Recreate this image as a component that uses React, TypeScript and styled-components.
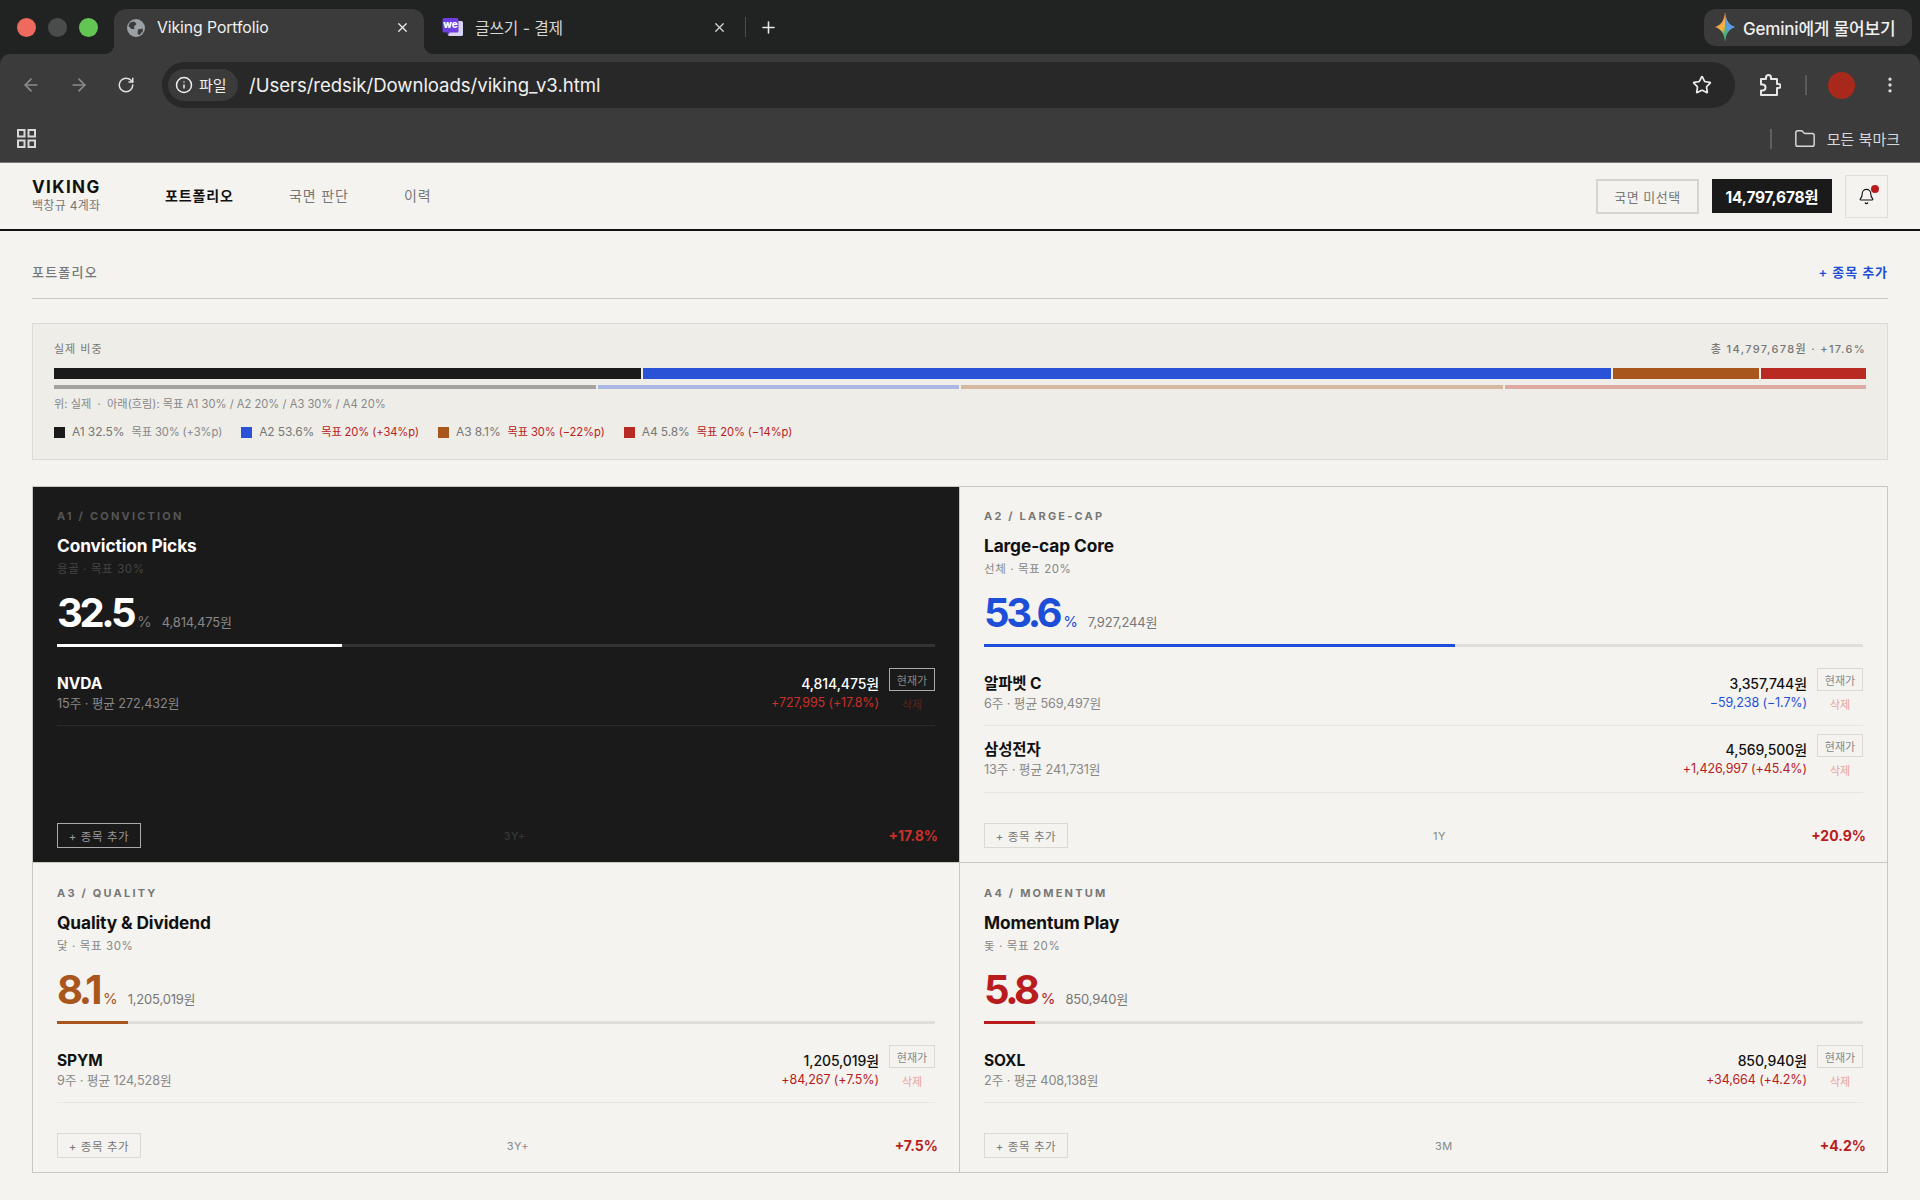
import React from "react";
import styled, { createGlobalStyle } from "styled-components";
import { ArrowLeft, ArrowRight, RotateCw, Info, Star, EllipsisVertical, Folder, Bell, X, Plus } from "lucide-react";

const FONT = `Inter, "Noto Sans CJK KR", sans-serif`;

const Global = createGlobalStyle`
  html, body { margin: 0; padding: 0; background: #f4f3ef; }
  body { font-family: ${FONT}; color: #111; overflow: hidden; }
  * { box-sizing: border-box; }
`;

const ChromeFrame = styled.div`background: #202322;`;
const TabStrip = styled.div`
  height: 54px; display: flex; align-items: flex-end; color: #e8e8e8;
`;
const Lights = styled.div`
  width: 114px; height: 54px; padding-left: 17px; display: flex; gap: 12px; align-items: center;
`;
const Light = styled.span<{ $c: string }>`
  width: 19px; height: 19px; border-radius: 50%; background: ${p => p.$c};
`;
const Tab = styled.div<{ $active?: boolean }>`
  position: relative; width: ${p => (p.$active ? 310 : 321)}px; height: 45px; border-radius: 12px 12px 0 0; background: ${p => (p.$active ? "#3b3b3b" : "transparent")};
  display: flex; align-items: center; padding: 0 ${p => (p.$active ? "14px 8px 13px" : "18px 8px 18px")}; gap: ${p => (p.$active ? 12 : 11)}px; font-size: 15.800px; letter-spacing: -0.1px; color: ${p => (p.$active ? "#f0f0f0" : "#d6d6d6")};
  ${p => p.$active && `
    &::before, &::after { content: ""; position: absolute; bottom: 0; width: 10px; height: 10px; }
    &::before { left: -10px; background: radial-gradient(circle at 0 0, #202322 10px, #3b3b3b 10.5px); }
    &::after { right: -10px; background: radial-gradient(circle at 100% 0, #202322 10px, #3b3b3b 10.5px); }
  `}
`;
const TabTitle = styled.span`flex: 1; white-space: nowrap;`;
const TabSep = styled.span`width: 1px; height: 20px; background: #4b4d4d; margin: 0 0 17px 0;`;
const NewTab = styled.span`display: flex; margin: 0 0 17px 13px;`;
const Gemini = styled.div`
  margin-left: auto; margin-right: 8px; margin-bottom: 8px; width: 208px; height: 37px; background: #3b3b3b; border-radius: 12px;
  display: flex; align-items: center; gap: 8px; padding: 0 0 1px 11px; font-size: 17px; font-weight: 500; color: #f0f0f0; white-space: nowrap; letter-spacing: -0.2px;
`;
const Toolbar = styled.div`
  height: 62px; background: #3b3b3b; display: flex; align-items: center; padding: 0 0 0 21px; color: #e6e6e6;
  border-radius: 10px 10px 0 0;
`;
const NavIcons = styled.div`display: flex; align-items: center; gap: 28px; width: 141px;`;
const Omni = styled.div`
  width: 1573px; height: 46px; background: #282828; border-radius: 23px; display: flex; align-items: center; padding: 0 23px 0 6px;
`;
const FilePill = styled.div`
  width: 70px; height: 32px; border-radius: 16px; background: #3b3b3b; display: flex; align-items: center; gap: 6px; padding: 0 0 1px 7px; font-size: 15px; color: #eee;
`;
const Url = styled.span`margin-left: 11px; flex: 1; font-size: 18.600px; color: #f0f0f0; letter-spacing: -0.05px;`;
const ToolRight = styled.div`flex: 1; display: flex; align-items: center; padding-left: 24px;`;
const ToolSep = styled.span`width: 2px; height: 20px; background: #5a5a5a; margin: 0 21px 0 24px;`;
const Avatar = styled.span`width: 27px; height: 27px; border-radius: 50%; background: #a8291c; margin-right: 25px;`;
const BookmarkBar = styled.div`
  height: 47px; background: #3b3b3b; border-bottom: 1px solid #777; display: flex; align-items: flex-start; padding: 0 20px 0 17px; color: #d8d8d8;
`;
const AppsIcon = styled.span`margin-top: 13px; display: flex;`;
const BmRight = styled.div`margin-left: auto; display: flex; align-items: center; gap: 11px; font-size: 15px; height: 40px; margin-top: 3px; white-space: nowrap;`;
const BmLabel = styled.span`margin-top: -2px;`;
const BmSep = styled.span`width: 2px; height: 20px; background: #5f5f5f; margin-right: 11px;`;

const Header = styled.header`
  height: 68px; border-bottom: 2px solid #111; background: #f4f3ef; display: flex; align-items: center; padding: 0 32px;
`;
const Brand = styled.div`width: 133px; display: flex; flex-direction: column; gap: 1px; margin-top: -3px;`;
const Logo = styled.div`font-size: 17px; line-height: 21px; font-weight: 700; letter-spacing: 1.4px; color: #111;`;
const LogoSub = styled.div`font-size: 12px; line-height: 14px; color: #777; letter-spacing: 0.3px;`;
const Nav = styled.nav`display: flex; gap: 55px; margin-top: -2px;`;
const NavItem = styled.span<{ $active?: boolean }>`
  font-size: 14px; letter-spacing: 0.9px; font-weight: ${p => (p.$active ? 700 : 400)}; color: ${p => (p.$active ? "#111" : "#777")};
`;
const HeaderRight = styled.div`margin-left: auto; display: flex; align-items: center;`;
const RegimeBtn = styled.div`
  width: 103px; height: 35px; border: 2px solid #d6d4cd; display: flex; align-items: center; justify-content: center; font-size: 13px; letter-spacing: 0.5px; color: #777;
`;
const Money = styled.div`
  margin-left: 13px; width: 120px; height: 34px; background: #1a1a1a; color: #fff; display: flex; align-items: center; justify-content: center; font-size: 15.500px; font-weight: 700; letter-spacing: -0.2px;
`;
const BellBox = styled.div`
  margin-left: 13px; width: 43px; height: 43px; border: 1px solid #e0ded8; display: flex; align-items: center; justify-content: center; position: relative; color: #111;
`;
const BellDot = styled.span`position: absolute; width: 8px; height: 8px; border-radius: 50%; background: #b91c1c; top: 9px; right: 8px;`;

const Main = styled.main`padding: 0 32px;`;
const SectionHead = styled.div`
  padding: 33px 0 18px; border-bottom: 1px solid #c9c7c1; display: flex; justify-content: space-between; align-items: center; line-height: 16px;
`;
const SectionTitle = styled.span`font-size: 13px; letter-spacing: 1.2px; color: #777; font-weight: 500;`;
const AddLink = styled.span`font-size: 13px; letter-spacing: 0.9px; color: #1d4ed8; font-weight: 600;`;

const Panel = styled.section`
  margin-top: 24px; height: 137px; background: #eeede8; border: 1px solid #dcdad4; padding: 18px 21px 0;
`;
const PanelTop = styled.div`display: flex; justify-content: space-between; font-size: 11px; line-height: 14px; color: #777; letter-spacing: 1px;`;
const PanelTotal = styled.span`letter-spacing: 1.35px; font-weight: 500;`;
const BarRow = styled.div<{ $h: number; $mt: number }>`
  display: flex; gap: 2px; height: ${p => p.$h}px; margin-top: ${p => p.$mt}px;
`;
const BarSeg = styled.div<{ $c: string; $faint?: boolean }>`
  background: ${p => p.$c}; opacity: ${p => (p.$faint ? 0.35 : 1)};
`;
const Note = styled.div`margin-top: 8px; font-size: 11.200px; line-height: 14px; color: #888;`;
const Legend = styled.div`margin-top: 13px; display: flex; gap: 19px; font-size: 12px; line-height: 16px;`;
const LegendItem = styled.div`display: flex; align-items: center; color: #777; letter-spacing: -0.1px;`;
const Swatch = styled.span<{ $c: string }>`width: 11px; height: 11px; background: ${p => p.$c}; margin-right: 7px;`;
const LegendGoal = styled.span<{ $off?: boolean }>`margin-left: 7px; font-size: 11.200px; color: ${p => (p.$off ? "#b91c1c" : "#888")};`;

const Grid = styled.section`
  margin-top: 26px; border: 1px solid #c9c7c1; display: grid; grid-template-columns: 1fr 1fr; grid-template-rows: 376px 309px;
`;
const Card = styled.article<{ $dark?: boolean; $right?: boolean; $bottom?: boolean }>`
  background: ${p => (p.$dark ? "#1a1a1a" : "#f4f3ef")};
  border-right: ${p => (p.$right ? "none" : "1px solid #c9c7c1")};
  border-bottom: ${p => (p.$bottom ? "none" : "1px solid #c9c7c1")};
  padding: ${p => (p.$bottom ? 23 : 22)}px 24px 14px; display: flex; flex-direction: column; color: ${p => (p.$dark ? "#fff" : "#111")};
`;
const Label = styled.div<{ $dark?: boolean }>`
  font-size: 11px; line-height: 14px; font-weight: 700; letter-spacing: 2.200px; color: ${p => (p.$dark ? "#555" : "#777")};
`;
const Title = styled.h2`margin: 12px 0 0; font-size: 17.300px; line-height: 22px; font-weight: 700; letter-spacing: -0.1px;`;
const Sub = styled.div<{ $dark?: boolean }>`
  margin-top: 5px; font-size: 11.500px; line-height: 14px; letter-spacing: 0.6px; color: ${p => (p.$dark ? "#444" : "#888")};
`;
const BigRow = styled.div`margin-top: 15px; height: 44px; display: flex; align-items: baseline; line-height: 44px;`;
const BigNum = styled.span<{ $c: string }>`font-size: 40px; font-weight: 700; letter-spacing: -3.400px; color: ${p => p.$c};`;
const BigPct = styled.span<{ $c: string }>`margin-left: 4px; font-size: 15px; color: ${p => p.$c};`;
const BigAmt = styled.span<{ $dark?: boolean }>`margin-left: 10px; font-size: 13px; letter-spacing: -0.2px; color: ${p => (p.$dark ? "#888" : "#777")};`;
const Track = styled.div<{ $dark?: boolean }>`margin-top: 9px; height: 3px; background: ${p => (p.$dark ? "#333" : "#e0ded8")};`;
const Fill = styled.div<{ $c: string }>`height: 100%; background: ${p => p.$c};`;
const Rows = styled.div`margin-top: 12px;`;
const Row = styled.div<{ $dark?: boolean }>`
  height: 67px; border-bottom: 1px solid ${p => (p.$dark ? "#2a2a2a" : "#e8e6e0")}; display: flex; padding-top: 9px;
  & + & { padding-top: 8px; }
`;
const RowLeft = styled.div`flex: 1; padding-top: 7px;`;
const Name = styled.div`font-size: 15.500px; line-height: 18px; font-weight: 700; letter-spacing: -0.1px;`;
const Meta = styled.div<{ $dark?: boolean }>`margin-top: 3px; font-size: 12.700px; line-height: 16px; letter-spacing: -0.1px; color: #888;`;
const RowRight = styled.div`text-align: right; padding-top: 7px;`;
const Amount = styled.div`font-size: 14px; line-height: 18px; font-weight: 500; letter-spacing: -0.1px;`;
const Gain = styled.div<{ $c: string }>`margin-top: 2px; font-size: 12.500px; line-height: 16px; letter-spacing: -0.1px; color: ${p => p.$c};`;
const RowActions = styled.div`margin-left: 10px; width: 46px; display: flex; flex-direction: column; align-items: center;`;
const PriceBtn = styled.div<{ $dark?: boolean }>`
  width: 46px; height: 23px; border: 1px solid ${p => (p.$dark ? "#aaa" : "#dbd9d3")}; font-size: 11px; display: flex; align-items: center; justify-content: center; color: #888;
`;
const DelBtn = styled.div<{ $dark?: boolean }>`margin-top: 7px; font-size: 11px; line-height: 14px; color: ${p => (p.$dark ? "#5a2420" : "#e6a4a0")};`;
const Foot = styled.div`margin-top: auto; display: flex; justify-content: space-between; align-items: center;`;
const AddBtn = styled.div<{ $dark?: boolean }>`
  width: 84px; height: 25px; border: 1px solid ${p => (p.$dark ? "#aaa" : "#dbd9d3")}; font-size: 11.500px; letter-spacing: 0.6px; display: flex; align-items: center; justify-content: center; color: ${p => (p.$dark ? "#999" : "#777")};
`;
const Term = styled.span<{ $dark?: boolean }>`font-size: 11px; letter-spacing: 0.5px; color: ${p => (p.$dark ? "#3c3c3c" : "#888")};`;
const FootPct = styled.span<{ $c: string }>`font-size: 14px; font-weight: 700; margin-right: -3px; color: ${p => p.$c};`;

const RED = "#b91c1c", BLUE = "#1d4ed8";

const SEGMENTS = [
  { c: "#1a1a1a", actual: 32.5, target: 30, goal: "목표 30% (+3%p)", off: false },
  { c: "#2952d6", actual: 53.6, target: 20, goal: "목표 20% (+34%p)", off: true },
  { c: "#a8561b", actual: 8.1, target: 30, goal: "목표 30% (−22%p)", off: true },
  { c: "#b92a22", actual: 5.8, target: 20, goal: "목표 20% (−14%p)", off: true },
];

type Holding = { name: string; meta: string; amount: string; gain: string; up: boolean };
type Sleeve = {
  label: string; title: string; sub: string; pct: number; amount: string; color: string; dark?: boolean;
  term: string; total: string; holdings: Holding[];
};

const SLEEVES: Sleeve[] = [
  { label: "A1 / CONVICTION", title: "Conviction Picks", sub: "용골 · 목표 30%", pct: 32.5, amount: "4,814,475원", color: "#ffffff", dark: true, term: "3Y+", total: "+17.8%",
    holdings: [{ name: "NVDA", meta: "15주 · 평균 272,432원", amount: "4,814,475원", gain: "+727,995 (+17.8%)", up: true }] },
  { label: "A2 / LARGE-CAP", title: "Large-cap Core", sub: "선체 · 목표 20%", pct: 53.6, amount: "7,927,244원", color: BLUE, term: "1Y", total: "+20.9%",
    holdings: [
      { name: "알파벳 C", meta: "6주 · 평균 569,497원", amount: "3,357,744원", gain: "−59,238 (−1.7%)", up: false },
      { name: "삼성전자", meta: "13주 · 평균 241,731원", amount: "4,569,500원", gain: "+1,426,997 (+45.4%)", up: true },
    ] },
  { label: "A3 / QUALITY", title: "Quality & Dividend", sub: "닻 · 목표 30%", pct: 8.1, amount: "1,205,019원", color: "#a8561b", term: "3Y+", total: "+7.5%",
    holdings: [{ name: "SPYM", meta: "9주 · 평균 124,528원", amount: "1,205,019원", gain: "+84,267 (+7.5%)", up: true }] },
  { label: "A4 / MOMENTUM", title: "Momentum Play", sub: "돛 · 목표 20%", pct: 5.8, amount: "850,940원", color: RED, term: "3M", total: "+4.2%",
    holdings: [{ name: "SOXL", meta: "2주 · 평균 408,138원", amount: "850,940원", gain: "+34,664 (+4.2%)", up: true }] },
];

const GlobeIcon = () => (
  <svg width="18" height="18" viewBox="0 0 18 18">
    <circle cx="9" cy="9" r="9" fill="#9aa0a6" />
    <path d="M3 3.5 7.5 2.5 9.5 5 7 7.5 7.5 10 4.5 10 1.5 7ZM11 10.5 15.5 9.5 16 12 12.5 16 10.5 15Z" fill="#3b3b3b" />
  </svg>
);
const WeIcon = () => (
  <svg width="22" height="22" viewBox="0 0 22 22">
    <rect x="6" y="4" width="15" height="15" rx="1.5" fill="#d9d4f5" />
    <path d="M2 1h13a1.5 1.5 0 0 1 1.5 1.5V14a1.5 1.5 0 0 1-1.5 1.5H8l-2.5 3V15.500H2A1.500 1.500 0 0 1 .5 14V2.500A1.500 1.500 0 0 1 2 1Z" fill="#6d3fe0" />
    <text x="8.500" y="11" textAnchor="middle" fontSize="10" fontWeight="800" fill="#fff" fontFamily="Inter, sans-serif">we</text>
  </svg>
);
const GeminiIcon = () => (
  <svg width="20" height="30" viewBox="0 0 20 30">
    <defs>
      <linearGradient id="gemA" x1="0" y1="0" x2="1" y2="1">
        <stop offset="0" stopColor="#f0574a" /><stop offset="0.45" stopColor="#f5b942" /><stop offset="0.6" stopColor="#4fb36a" /><stop offset="1" stopColor="#4285f4" />
      </linearGradient>
      <linearGradient id="gemB" x1="1" y1="0" x2="0.3" y2="1">
        <stop offset="0" stopColor="#4a8cf5" /><stop offset="0.6" stopColor="#5b9bf5" /><stop offset="1" stopColor="#48b36f" />
      </linearGradient>
    </defs>
    <path d="M10 0C10.800 8 13 12.500 20 15 13 17.500 10.800 22 10 30 9.200 22 7 17.500 0 15 7 12.500 9.200 8 10 0Z" fill="url(#gemA)" />
    <path d="M10 0C10.800 8 13 12.500 20 15 13 17.500 10.800 22 10 30Z" fill="url(#gemB)" />
  </svg>
);
const ExtIcon = () => (
  <svg width="22" height="24" viewBox="0 0 22 24" fill="none" stroke="#e6e6e6" strokeWidth="2" strokeLinejoin="round">
    <path d="M2 6h5V4.500a2.500 2.500 0 0 1 5 0V6h6v5h1.500a2 2 0 0 1 0 4H18v7H2v-4.500h1.500a3 3 0 0 0 0-6H2Z" />
  </svg>
);
const AppsSvg = () => (
  <svg width="19" height="19" viewBox="0 0 19 19" fill="none" stroke="#d8d8d8" strokeWidth="2">
    <rect x="1" y="1" width="6.500" height="6.500" /><rect x="11.500" y="1" width="6.500" height="6.500" />
    <rect x="1" y="11.500" width="6.500" height="6.500" /><rect x="11.500" y="11.500" width="6.500" height="6.500" />
  </svg>
);

function SleeveCard({ s, index }: { s: Sleeve; index: number }) {
  const numColor = s.dark ? "#fff" : s.color;
  const pctColor = s.dark ? "#777" : s.color;
  const totalColor = s.dark ? "#c9302a" : RED;
  return (
    <Card $dark={s.dark} $right={index % 2 === 1} $bottom={index >= 2}>
      <Label $dark={s.dark}>{s.label}</Label>
      <Title>{s.title}</Title>
      <Sub $dark={s.dark}>{s.sub}</Sub>
      <BigRow>
        <BigNum $c={numColor}>{s.pct}</BigNum>
        <BigPct $c={pctColor}>%</BigPct>
        <BigAmt $dark={s.dark}>{s.amount}</BigAmt>
      </BigRow>
      <Track $dark={s.dark}><Fill $c={s.color} style={{ width: `${s.pct}%` }} /></Track>
      <Rows>
        {s.holdings.map(h => (
          <Row key={h.name} $dark={s.dark}>
            <RowLeft>
              <Name>{h.name}</Name>
              <Meta $dark={s.dark}>{h.meta}</Meta>
            </RowLeft>
            <RowRight>
              <Amount>{h.amount}</Amount>
              <Gain $c={h.up ? (s.dark ? "#c9302a" : RED) : BLUE}>{h.gain}</Gain>
            </RowRight>
            <RowActions>
              <PriceBtn $dark={s.dark}>현재가</PriceBtn>
              <DelBtn $dark={s.dark}>삭제</DelBtn>
            </RowActions>
          </Row>
        ))}
      </Rows>
      <Foot>
        <AddBtn $dark={s.dark}>+ 종목 추가</AddBtn>
        <Term $dark={s.dark}>{s.term}</Term>
        <FootPct $c={totalColor}>{s.total}</FootPct>
      </Foot>
    </Card>
  );
}

export default function App() {
  return (
    <>
      <Global />
      <ChromeFrame>
        <TabStrip>
          <Lights>
            <Light $c="#ee6a5f" />
            <Light $c="#4a4c4c" />
            <Light $c="#62c554" />
          </Lights>
          <Tab $active>
            <GlobeIcon />
            <TabTitle>Viking Portfolio</TabTitle>
            <X size={15} strokeWidth={2} />
          </Tab>
          <Tab>
            <WeIcon />
            <TabTitle>글쓰기 - 결제</TabTitle>
            <X size={15} strokeWidth={2} />
          </Tab>
          <TabSep />
          <NewTab><Plus size={19} strokeWidth={2} /></NewTab>
          <Gemini><GeminiIcon />Gemini에게 물어보기</Gemini>
        </TabStrip>
        <Toolbar>
          <NavIcons>
            <ArrowLeft size={20} color="#8c8c8c" />
            <ArrowRight size={20} color="#8c8c8c" />
            <RotateCw size={18} color="#e0e0e0" />
          </NavIcons>
          <Omni>
            <FilePill><Info size={18} />파일</FilePill>
            <Url>/Users/redsik/Downloads/viking_v3.html</Url>
            <Star size={20} color="#eee" />
          </Omni>
          <ToolRight>
            <ExtIcon />
            <ToolSep />
            <Avatar />
            <EllipsisVertical size={20} color="#ddd" />
          </ToolRight>
        </Toolbar>
        <BookmarkBar>
          <AppsIcon><AppsSvg /></AppsIcon>
          <BmRight>
            <BmSep />
            <Folder size={22} strokeWidth={1.6} />
            <BmLabel>모든 북마크</BmLabel>
          </BmRight>
        </BookmarkBar>
      </ChromeFrame>

      <Header>
        <Brand>
          <Logo>VIKING</Logo>
          <LogoSub>백창규 4계좌</LogoSub>
        </Brand>
        <Nav>
          <NavItem $active>포트폴리오</NavItem>
          <NavItem>국면 판단</NavItem>
          <NavItem>이력</NavItem>
        </Nav>
        <HeaderRight>
          <RegimeBtn>국면 미선택</RegimeBtn>
          <Money>14,797,678원</Money>
          <BellBox><Bell size={17} strokeWidth={1.6} /><BellDot /></BellBox>
        </HeaderRight>
      </Header>

      <Main>
        <SectionHead>
          <SectionTitle>포트폴리오</SectionTitle>
          <AddLink>+ 종목 추가</AddLink>
        </SectionHead>

        <Panel>
          <PanelTop>
            <span>실제 비중</span>
            <PanelTotal>총 14,797,678원 · +17.6%</PanelTotal>
          </PanelTop>
          <BarRow $h={11} $mt={12}>
            {SEGMENTS.map(s => <BarSeg key={s.c} $c={s.c} style={{ flex: s.actual }} />)}
          </BarRow>
          <BarRow $h={4} $mt={6}>
            {SEGMENTS.map(s => <BarSeg key={s.c} $c={s.c} $faint style={{ flex: s.target }} />)}
          </BarRow>
          <Note>위: 실제 &nbsp;· &nbsp;아래(흐림): 목표 A1 30% / A2 20% / A3 30% / A4 20%</Note>
          <Legend>
            {SEGMENTS.map((s, i) => (
              <LegendItem key={s.c}>
                <Swatch $c={s.c} />
                A{i + 1} {s.actual}%
                <LegendGoal $off={s.off}>{s.goal}</LegendGoal>
              </LegendItem>
            ))}
          </Legend>
        </Panel>

        <Grid>
          {SLEEVES.map((s, i) => <SleeveCard key={s.label} s={s} index={i} />)}
        </Grid>
      </Main>
    </>
  );
}
